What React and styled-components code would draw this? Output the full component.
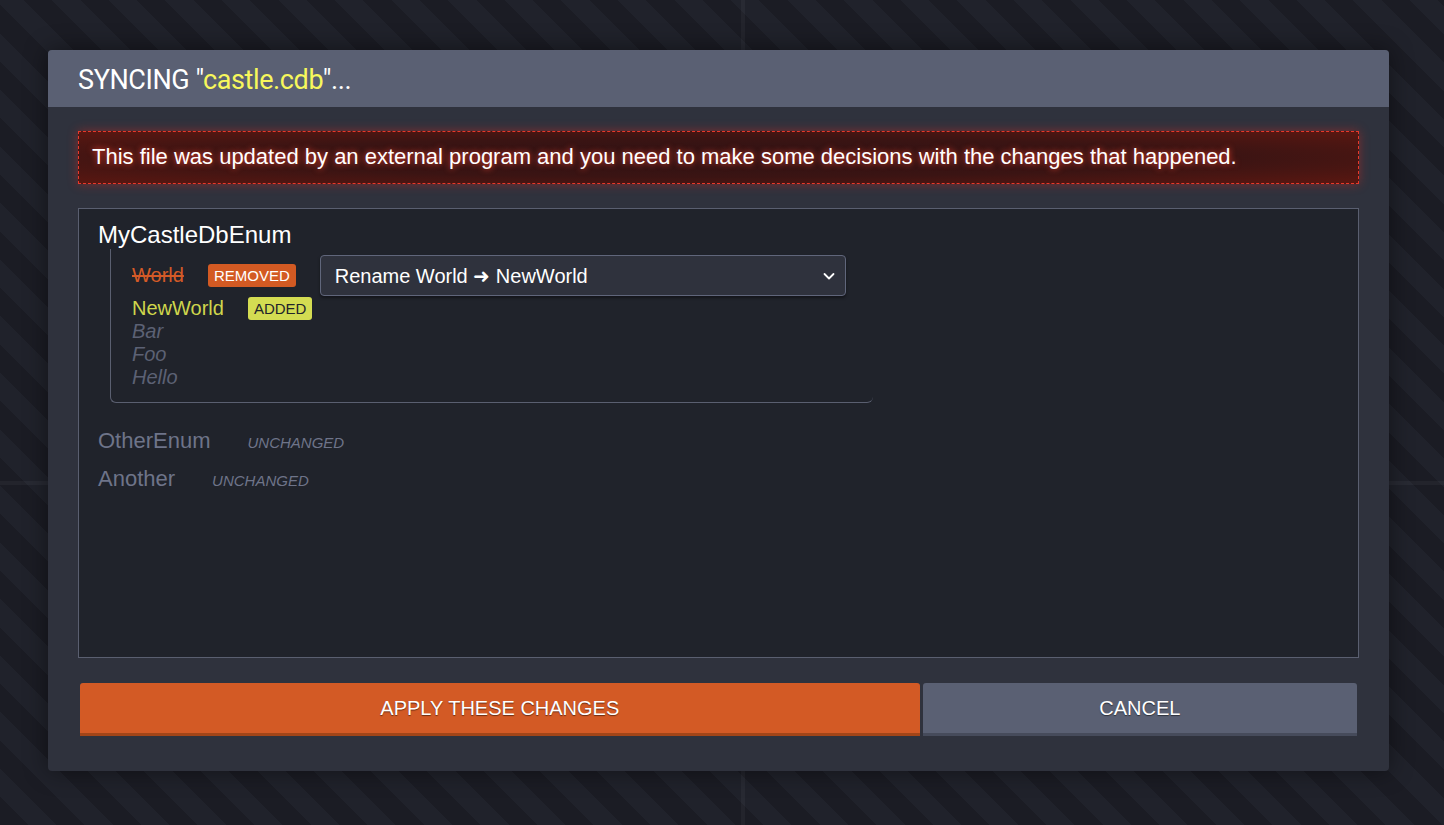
import React from "react";
import styled, { createGlobalStyle } from "styled-components";

const GlobalStyle = createGlobalStyle`
  html, body {
    margin: 0;
    padding: 0;
  }
  body {
    font-family: "Liberation Sans", Arial, sans-serif;
    color: #fff;
  }
`;

const Backdrop = styled.div`
  position: relative;
  width: 1444px;
  height: 825px;
  box-sizing: border-box;
  padding: 50px 55px 0 48px;
  background-color: #1e2028;
  background-image: repeating-linear-gradient(
    45deg,
    #1b1c24 0px,
    #1b1c24 20px,
    #20222b 20px,
    #20222b 40px
  );
  overflow: hidden;
`;

const GridLine = styled.div`
  position: absolute;
  background: rgba(255, 255, 255, 0.04);
  ${(p) =>
    p.vertical
      ? `left: 741px; top: 0; width: 4px; height: 100%;`
      : `top: 481px; left: 0; height: 4px; width: 100%;`}
`;

const Modal = styled.div`
  position: relative;
  width: 1341px;
  height: 721px;
  background: #2f323d;
  border-radius: 4px;
  box-shadow: 0 0 24px rgba(0, 0, 0, 0.45);
  display: flex;
  flex-direction: column;
  overflow: hidden;
`;

const Header = styled.div`
  height: 57px;
  background: #5a6073;
  display: flex;
  align-items: center;
  padding: 0 30px;
  box-sizing: border-box;
`;

const Title = styled.h1`
  margin: 0;
  font-family: Roboto, "Liberation Sans", sans-serif;
  font-weight: 400;
  font-size: 27px;
  letter-spacing: -0.4px;
  color: #fff;
  padding-top: 2px;
`;

const FileName = styled.span`
  color: #f7f75c;
`;

const Body = styled.div`
  flex: 1;
  display: flex;
  flex-direction: column;
  padding: 24px 30px 34px;
  box-sizing: border-box;
`;

const Alert = styled.div`
  height: 53px;
  box-sizing: border-box;
  border: 1px dashed #e8382a;
  background: radial-gradient(
    ellipse at center,
    #2e1214 0%,
    #3b1413 55%,
    #5a1711 100%
  );
  box-shadow: 0 0 10px rgba(220, 40, 30, 0.45);
  display: flex;
  align-items: center;
  padding: 0 13px 2px;
  font-size: 22px;
  color: #fff;
  text-shadow: 0 0 6px rgba(255, 70, 50, 1);
`;

const Panel = styled.div`
  margin-top: 24px;
  height: 450px;
  box-sizing: border-box;
  background: #20232b;
  border: 1px solid #5a5f70;
  padding: 12px 19px;
`;

const EnumName = styled.div`
  font-size: ${(p) => (p.dim ? "22px" : "24px")};
  line-height: 28px;
  color: ${(p) => (p.dim ? "#6e7489" : "#fff")};
  margin-right: 37px;
`;

const EnumGroup = styled.div`
  display: flex;
  flex-direction: column;
`;

const ValueList = styled.div`
  margin-left: 12px;
  width: 763px;
  box-sizing: border-box;
  border-left: 1px solid #5a5f70;
  border-bottom: 1px solid #5a5f70;
  border-radius: 0 0 6px 6px;
  padding: 6px 0 13px 21px;
  display: flex;
  flex-direction: column;
`;

const ValueRow = styled.div`
  display: flex;
  align-items: center;
  gap: 24px;
  min-height: ${(p) => (p.tall ? "41px" : "23px")};
  margin-bottom: ${(p) => (p.tall ? "1px" : "0")};
`;

const ValueName = styled.span`
  font-size: 20px;
  line-height: 23px;
  color: ${(p) =>
    p.kind === "removed" ? "#d45a27" : p.kind === "added" ? "#cfd64c" : "#5c6174"};
  font-style: ${(p) => (p.kind ? "normal" : "italic")};
  text-decoration: ${(p) => (p.kind === "removed" ? "line-through" : "none")};
`;

const Badge = styled.span`
  display: inline-block;
  font-size: 15px;
  line-height: 23px;
  padding: 0 6px;
  border-radius: 3px;
  background: ${(p) => (p.kind === "removed" ? "#d35a23" : "#d4dc52")};
  color: ${(p) => (p.kind === "removed" ? "#fff" : "#22242b")};
`;

const SelectBox = styled.div`
  width: 526px;
  height: 41px;
  box-sizing: border-box;
  background: #2f323d;
  border: 1px solid #60667b;
  border-radius: 4px;
  box-shadow: 0 2px 3px rgba(0, 0, 0, 0.4);
  display: flex;
  align-items: center;
  justify-content: space-between;
  padding: 0 8px 0 14px;
  font-size: 20px;
  color: #fff;
`;

const EnumRow = styled.div`
  display: flex;
  align-items: baseline;
  margin-top: ${(p) => p.gap || 0}px;
`;

const Unchanged = styled.span`
  font-size: 15px;
  font-style: italic;
  color: #6e7489;
`;

const Actions = styled.div`
  margin-top: 25px;
  padding: 0 2px;
  display: flex;
  gap: 3px;
`;

const Button = styled.button`
  flex: ${(p) => p.grow};
  height: 53px;
  border: none;
  border-radius: 3px 3px 0 0;
  font-family: "Liberation Sans", Arial, sans-serif;
  font-size: 20px;
  text-transform: uppercase;
  color: #fff;
  text-shadow: 0 1px 1px rgba(0, 0, 0, 0.5);
  background: ${(p) => (p.primary ? "#d35a25" : "#5a6073")};
  border-bottom: 3px solid ${(p) => (p.primary ? "#a24518" : "#464b5b")};
  padding: 0;
  cursor: pointer;
`;

const Chevron = () => (
  <svg width="16" height="16" viewBox="0 0 16 16">
    <path
      d="M3.5 6 L8 10.5 L12.5 6"
      fill="none"
      stroke="#fff"
      strokeWidth="1.8"
      strokeLinecap="round"
      strokeLinejoin="round"
    />
  </svg>
);

export default function App() {
  return (
    <>
      <GlobalStyle />
      <Backdrop>
        <GridLine vertical />
        <GridLine />
        <Modal>
          <Header>
            <Title>
              SYNCING "<FileName>castle.cdb</FileName>"...
            </Title>
          </Header>
          <Body>
            <Alert>
              This file was updated by an external program and you need to make
              some decisions with the changes that happened.
            </Alert>
            <Panel>
              <EnumGroup>
                <EnumName>MyCastleDbEnum</EnumName>
                <ValueList>
                  <ValueRow tall>
                    <ValueName kind="removed">World</ValueName>
                    <Badge kind="removed">REMOVED</Badge>
                    <SelectBox>
                      <span>Rename World ➜ NewWorld</span>
                      <Chevron />
                    </SelectBox>
                  </ValueRow>
                  <ValueRow>
                    <ValueName kind="added">NewWorld</ValueName>
                    <Badge kind="added">ADDED</Badge>
                  </ValueRow>
                  <ValueRow>
                    <ValueName>Bar</ValueName>
                  </ValueRow>
                  <ValueRow>
                    <ValueName>Foo</ValueName>
                  </ValueRow>
                  <ValueRow>
                    <ValueName>Hello</ValueName>
                  </ValueRow>
                </ValueList>
              </EnumGroup>
              <EnumRow gap={24}>
                <EnumName dim>OtherEnum</EnumName>
                <Unchanged>UNCHANGED</Unchanged>
              </EnumRow>
              <EnumRow gap={10}>
                <EnumName dim>Another</EnumName>
                <Unchanged>UNCHANGED</Unchanged>
              </EnumRow>
            </Panel>
            <Actions>
              <Button primary grow={839}>
                Apply these changes
              </Button>
              <Button grow={434}>Cancel</Button>
            </Actions>
          </Body>
        </Modal>
      </Backdrop>
    </>
  );
}
